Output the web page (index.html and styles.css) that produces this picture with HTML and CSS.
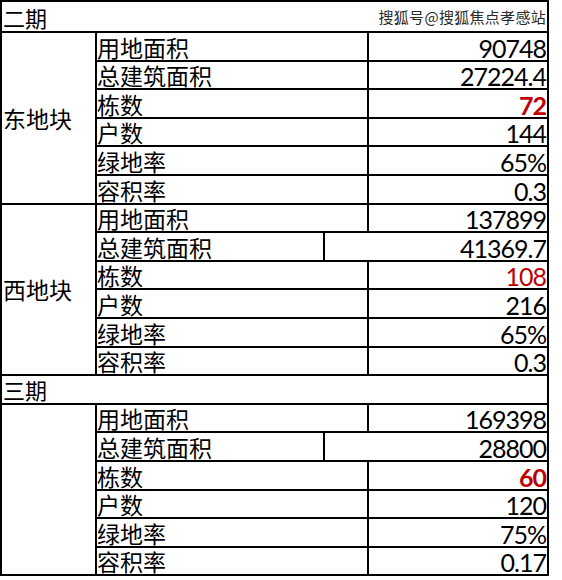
FILE: index.html
```html
<!DOCTYPE html>
<html lang="zh">
<head>
<meta charset="utf-8">
<link rel="stylesheet" href="styles.css">
</head>
<body>
<div class="sheet">
  <div class="cell group"><span>二期</span><span class="mark">搜狐号@搜狐焦点孝感站</span></div>
  <div class="cell label">东地块</div>
  <div class="cell field">用地面积</div><div class="cell value">90748</div>
  <div class="cell field">总建筑面积</div><div class="cell value">27224.4</div>
  <div class="cell field">栋数</div><div class="cell value red bold">72</div>
  <div class="cell field">户数</div><div class="cell value">144</div>
  <div class="cell field">绿地率</div><div class="cell value">65%</div>
  <div class="cell field">容积率</div><div class="cell value">0.3</div>

  <div class="cell label">西地块</div>
  <div class="cell field">用地面积</div><div class="cell value">137899</div>
  <div class="cell field narrow">总建筑面积</div><div class="cell value wide">41369.7</div>
  <div class="cell field">栋数</div><div class="cell value red">108</div>
  <div class="cell field">户数</div><div class="cell value">216</div>
  <div class="cell field">绿地率</div><div class="cell value">65%</div>
  <div class="cell field">容积率</div><div class="cell value">0.3</div>

  <div class="cell group"><span>三期</span></div>
  <div class="cell label"></div>
  <div class="cell field">用地面积</div><div class="cell value">169398</div>
  <div class="cell field narrow">总建筑面积</div><div class="cell value wide">28800</div>
  <div class="cell field">栋数</div><div class="cell value red bold">60</div>
  <div class="cell field">户数</div><div class="cell value">120</div>
  <div class="cell field">绿地率</div><div class="cell value">75%</div>
  <div class="cell field">容积率</div><div class="cell value">0.17</div>
</div>
</body>
</html>
```
FILE: styles.css
```css
html, body {
  margin: 0;
  padding: 0;
  background: #fff;
}
.sheet {
  display: grid;
  grid-template-columns: 93px 226px 42px 178px;
  grid-template-rows: 29px;
  grid-auto-rows: 26.6px;
  gap: 2px;
  padding: 2px;
  background: #000;
  width: fit-content;
  font-family: "Noto Sans CJK SC", sans-serif;
  color: #000;
}
.cell {
  background: #fff;
  display: flex;
  align-items: flex-end;
  line-height: 26px;
  font-size: 23px;
}
.group {
  grid-column: span 4;
  justify-content: space-between;
  align-items: center;
  padding-left: 1px;
  font-size: 22px;
}
.mark {
  font-size: 15px;
  line-height: 20px;
  color: #2a2a2a;
  text-shadow: 0 0 1px #fff, 0 0 1px #fff;
  letter-spacing: 0.3px;
  padding-right: 1px;
}
.label {
  grid-row: span 6;
  align-items: center;
  padding-left: 1px;
  font-size: 23px;
}
.field {
  grid-column: span 2;
}
.field.narrow {
  grid-column: span 1;
}
.value {
  justify-content: flex-end;
  font-family: "Lato", "DejaVu Sans", sans-serif;
  font-weight: 400;
  font-size: 25px;
  letter-spacing: -1px;
  line-height: 24px;
  padding-right: 1px;
  color: #000;
}
.value.wide {
  grid-column: span 2;
}
.value.red {
  color: #c00000;
}
.value.bold {
  font-weight: 700;
}
```
